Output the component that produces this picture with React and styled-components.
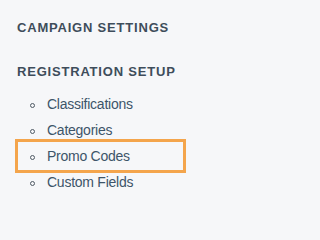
import React from "react";
import styled, { createGlobalStyle } from "styled-components";

const Global = createGlobalStyle`
  html, body { margin: 0; padding: 0; background: #f6f7f9; }
  body { width: 202px; height: 209px; overflow: hidden; }
`;

const Sidebar = styled.nav`
  padding: 20px 0 0 17px;
  font-family: "Liberation Sans", Arial, sans-serif;
  display: flex;
  flex-direction: column;
`;

const Heading = styled.div`
  font-size: 13px;
  line-height: 16px;
  font-weight: 700;
  letter-spacing: 0.8px;
  color: #3e4d5b;
  margin-bottom: ${(p) => p.$gap || 0}px;
`;

const List = styled.ul`
  list-style: none;
  margin: 11px 0 0;
  padding: 0;
`;

const Item = styled.li`
  position: relative;
  display: flex;
  align-items: center;
  height: 26px;
  padding-left: 30px;
  font-size: 14px;
  letter-spacing: -0.25px;
  color: #3d5569;

  &::before {
    content: "";
    position: absolute;
    left: 13px;
    top: 12px;
    width: 3px;
    height: 3px;
    border: 1.3px solid #4f5a64;
    border-radius: 50%;
  }

  ${(p) =>
    p.$active &&
    `
    &::after {
      content: "";
      position: absolute;
      left: -2px;
      top: -4px;
      width: 171px;
      height: 34px;
      box-sizing: border-box;
      border: 3px solid #f4a54c;
    }
  `}
`;

const items = ["Classifications", "Categories", "Promo Codes", "Custom Fields"];

export default function App() {
  return (
    <>
      <Global />
      <Sidebar>
        <Heading $gap={28}>CAMPAIGN SETTINGS</Heading>
        <Heading>REGISTRATION SETUP</Heading>
        <List>
          {items.map((t) => (
            <Item key={t} $active={t === "Promo Codes"}>
              {t}
            </Item>
          ))}
        </List>
      </Sidebar>
    </>
  );
}
